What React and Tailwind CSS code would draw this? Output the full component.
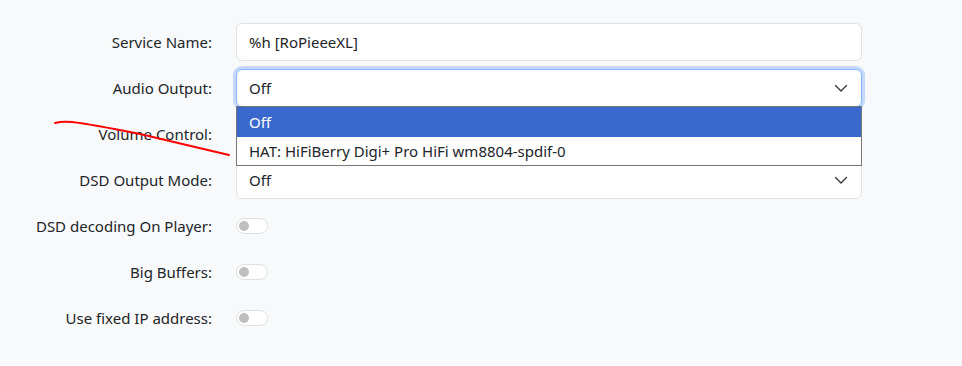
import React from "react";

function Chevron() {
  return (
    <svg width="16" height="16" viewBox="0 0 16 16" className="shrink-0">
      <path d="M2.5 5.5l5.5 5.5 5.5-5.5" fill="none" stroke="#343a40" strokeWidth="1.4" strokeLinecap="round" strokeLinejoin="round" />
    </svg>
  );
}

function Row({ label, children }) {
  return (
    <div className="flex items-center h-[38px] mb-2">
      <div className="w-[212px] shrink-0 text-right text-[15px] text-[#212529]">{label}</div>
      <div className="ml-6 w-[626px] shrink-0">{children}</div>
    </div>
  );
}

function Select({ value, focused }) {
  return (
    <div
      className={
        focused
          ? "h-[38px] bg-white border border-[#86b7fe] rounded-md flex items-center justify-between pl-3 pr-3 shadow-[0_0_0_3px_#c6d8fa]"
          : "h-[38px] bg-white border border-[#dee2e6] rounded-md flex items-center justify-between pl-3 pr-3"
      }
    >
      <span className="text-[15px] text-[#212529]">{value}</span>
      <Chevron />
    </div>
  );
}

function Toggle() {
  return (
    <div className="w-[32px] h-[16px] rounded-full border border-[#dee2e6] bg-white flex items-center pl-[2px]">
      <div className="w-[10px] h-[10px] rounded-full bg-[#bfbfbf]" />
    </div>
  );
}

export default function App() {
  return (
    <div className="relative min-h-[366px] bg-[#f8f9fa] pt-[23px] font-['Noto_Sans',sans-serif]">
      <Row label="Service Name:">
        <div className="h-[38px] bg-white border border-[#dee2e6] rounded-md flex items-center px-3 text-[15px] text-[#212529]">
          %h [RoPieeeXL]
        </div>
      </Row>
      <Row label="Audio Output:">
        <div className="relative">
          <Select value="Off" focused />
          <div className="absolute z-10 left-0 right-0 top-[37px] bg-white border border-[#767676] text-[15px]">
            <div className="h-[30px] flex items-center pl-3 bg-[#3b68cc] text-white">Off</div>
            <div className="h-[28px] flex items-center pl-3 text-[#212529]">HAT: HiFiBerry Digi+ Pro HiFi wm8804-spdif-0</div>
          </div>
        </div>
      </Row>
      <Row label="Volume Control:">
        <Select value="" />
      </Row>
      <Row label="DSD Output Mode:">
        <Select value="Off" />
      </Row>
      <Row label="DSD decoding On Player:">
        <Toggle />
      </Row>
      <Row label="Big Buffers:">
        <Toggle />
      </Row>
      <Row label="Use fixed IP address:">
        <Toggle />
      </Row>
      <svg className="absolute left-0 top-0 pointer-events-none z-20" width="962" height="366">
        <path d="M55 123 Q 62 121 72 122 Q 90 124 140 134 L 229 155" fill="none" stroke="#ff0000" strokeWidth="2" strokeLinecap="round" />
      </svg>
    </div>
  );
}
